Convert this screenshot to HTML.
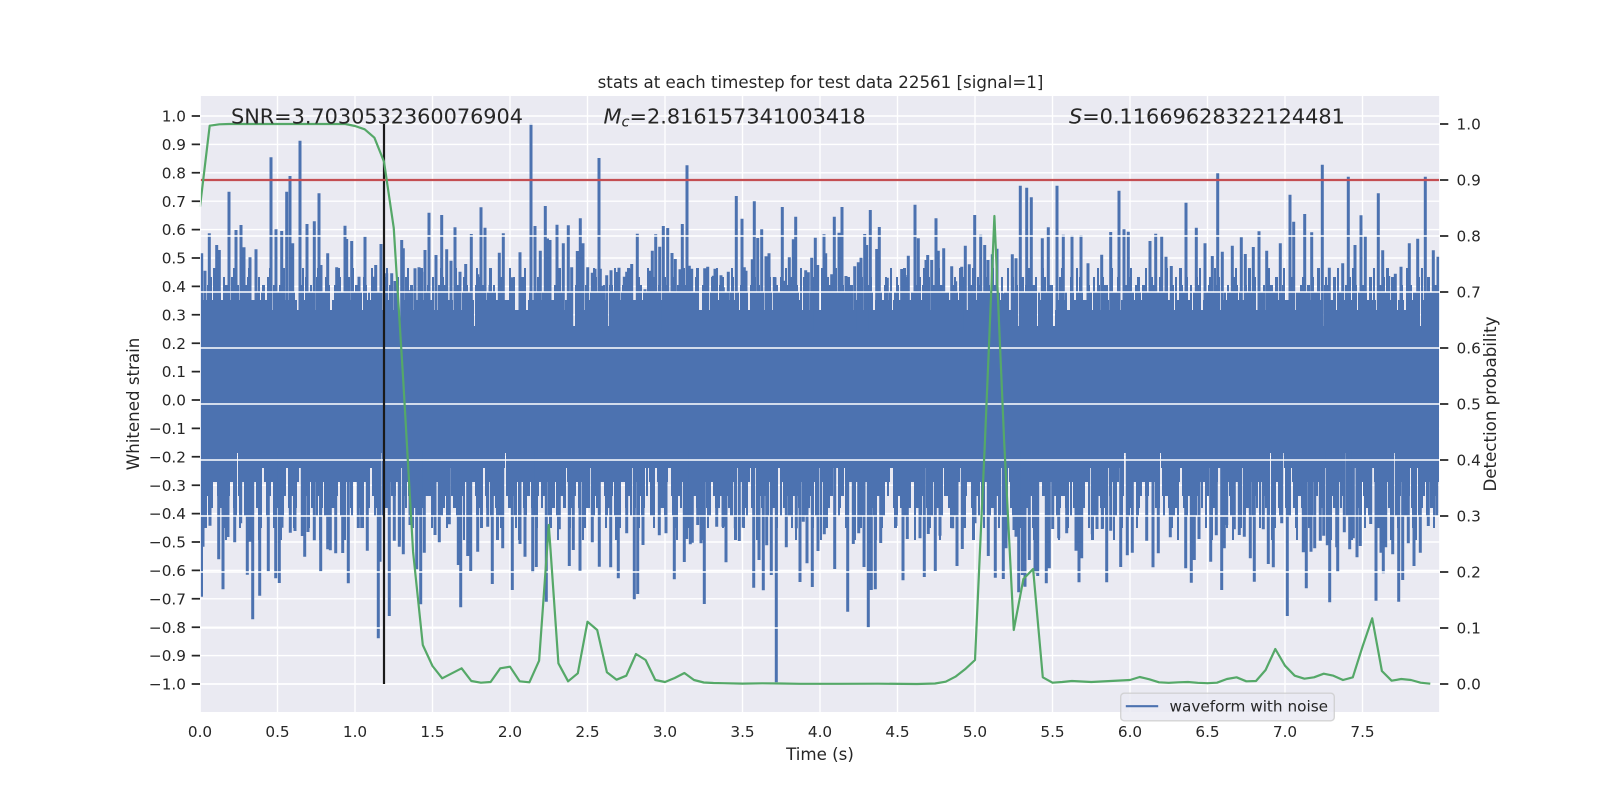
<!DOCTYPE html>
<html>
<head>
<meta charset="utf-8">
<title>stats at each timestep</title>
<style>
html,body{margin:0;padding:0;background:#fff;width:1600px;height:800px;overflow:hidden}
svg{display:block}
text{font-family:"DejaVu Sans","Liberation Sans",sans-serif;fill:#262626}
</style>
</head>
<body>
<svg xmlns="http://www.w3.org/2000/svg" width="1600" height="800" viewBox="0 0 1600 800">
<rect x="200" y="96" width="1240" height="616" fill="#eaeaf2"/>
<path fill="none" stroke="#fff" stroke-width="1.39" d="M277.5 96V712M355 96V712M432.5 96V712M510 96V712M587.5 96V712M665 96V712M742.5 96V712M820 96V712M897.5 96V712M975 96V712M1052.5 96V712M1130 96V712M1207.5 96V712M1285 96V712M1362.5 96V712M200 116H1440M200 144.4H1440M200 172.8H1440M200 201.2H1440M200 229.6H1440M200 258H1440M200 286.4H1440M200 314.8H1440M200 343.2H1440M200 371.6H1440M200 400H1440M200 428.4H1440M200 456.8H1440M200 485.2H1440M200 513.6H1440M200 542H1440M200 570.4H1440M200 598.8H1440M200 627.2H1440M200 655.6H1440M200 684H1440"/>
<rect x="200" y="326" width="1239" height="127" fill="#4c72b0"/>
<g fill="none" stroke="#4c72b0">
<path d="M200 320H1439" stroke-width="20" stroke-dasharray="13 2 7 1 17 3 9 2 6 1 14 3 10 2 19 2"/>
<path d="M200 315H1439" stroke-width="30" stroke-dasharray="7 3 5 4 9 2 3 4 8 5 6 2 11 6 4 3"/>
<path d="M200 311H1439" stroke-width="38" stroke-dasharray="3 4 5 7 2 3 4 6 2 5 6 8 3 3 2 4"/>
<path d="M200 307.5H1439" stroke-width="45" stroke-dasharray="2 5 3 8 2 4 4 9 2 6 3 7"/>
<path d="M200 303.5H1439" stroke-width="53" stroke-dasharray="2 7 3 11 2 6 3 13 2 9"/>
<path d="M200 299H1439" stroke-width="62" stroke-dasharray="2 11 3 17 2 13 2 19"/>
<path d="M200 459H1439" stroke-width="18" stroke-dashoffset="5" stroke-dasharray="13 2 7 1 17 3 9 2 6 1 14 3 10 2 19 2"/>
<path d="M200 466H1439" stroke-width="32" stroke-dashoffset="11" stroke-dasharray="7 3 5 4 9 2 3 4 8 5 6 2 11 6 4 3"/>
<path d="M200 473H1439" stroke-width="46" stroke-dashoffset="17" stroke-dasharray="3 4 5 7 2 3 4 6 2 5 6 8 3 3 2 4"/>
<path d="M200 479H1439" stroke-width="58" stroke-dashoffset="7" stroke-dasharray="3 5 4 6 2 7 5 8 3 4 2 6"/>
<path d="M200 483H1439" stroke-width="66" stroke-dashoffset="23" stroke-dasharray="2 7 3 11 2 6 3 13 2 9"/>
<path d="M200 489H1439" stroke-width="78" stroke-dashoffset="9" stroke-dasharray="2 11 3 17 2 13 2 19"/>
<path d="M200 495H1439" stroke-width="90" stroke-dasharray="2 23 2 31 3 19 2 37"/>
</g>
<path fill="none" stroke="#4c72b0" stroke-width="3" d="M201.7 253.3V330M205 270.7V330M209.3 233.3V330M216.7 245V330M219.3 250V330M229 191.7V330M236 230V330M241 225V330M244 247.3V330M250 257.3V330M256 249.3V330M271 157.3V330M276 229.3V330M281.7 231V330M286.7 191.7V330M290 176V330M292.7 243.3V330M300 140.7V330M307 224V330M314.3 221.3V330M319 193.3V330M321 265V330M327.7 253.3V330M336.7 267.3V330M345 225.7V330M346.7 239V330M351.7 241V330M359 276.7V330M365 236.7V330M373.3 276.7V330M375.7 265V330M381 244V330M386.7 273.3V330M391.7 273.3V330M395 281V330M401.7 240V330M403.3 248.3V330M408.3 290V330M411.7 289.3V330M415 268.3V330M419 267.3V330M421.7 271.7V330M425 250V330M429 212.7V330M436 255V330M441.7 215V330M446.7 249.3V330M451 260.7V330M455 227.3V330M460 271.7V330M465.7 264V330M471.3 234V330M477.7 274.3V330M481 207.3V330M485 227.7V330M490 285V330M499.3 252.7V330M503.3 233.3V330M512.3 277.3V330M520 252.3V330M523.3 278.3V330M531 123.3V330M535 226V330M540.3 250.7V330M545.3 206V330M547.5 238.5V330M550 240V330M557 224.7V330M563.3 243.3V330M568.3 225.3V330M571.7 267.3V330M577.3 251V330M580.3 218.3V330M583 243.3V330M587.7 267.3V330M592.3 272.7V330M595 268.7V330M599 158V330M600.3 268.7V330M602.7 285.7V330M606.7 275.3V330M611 270.3V330M616.7 272V330M619 267.7V330M624.3 276.7V330M626.7 271.7V330M629.3 268.7V330M631.7 264V330M637.3 233.7V330M639 285V330M645 289.3V330M649.7 270.7V330M652.3 250.7V330M655.7 234.3V330M659.7 246.7V330M663.3 226V330M667.7 228V330M672 253V330M675.3 259V330M680 269.3V330M682.3 224V330M687 165.3V330M689.3 265.7V330M691.7 268.7V330M704.7 268.3V330M707.7 266.7V330M713.3 275.7V330M715 268.7V330M721 275.3V330M723.3 287.3V330M728.3 271.7V330M736.3 196V330M742 218.7V330M744.3 267.3V330M746 270.7V330M752.3 259.3V330M754.3 201.3V330M757.7 238V330M761.7 229.3V330M766 256.3V330M769 253.3V330M774.3 277V330M775 277.3V330M782.3 207V330M785 280.7V330M789.3 257.3V330M793.3 239.3V330M795.7 216.7V330M805.7 270.3V330M808.3 272.3V330M811.7 257.7V330M815.3 237.7V330M817.7 265V330M824 234.3V330M825.7 253.3V330M831.7 274.3V330M834.3 216.7V330M839 232.7V330M842 207V330M846 276V330M854.7 266.3V330M858.3 262.3V330M861 257.7V330M864.7 234V330M866.7 245V330M870.3 210V330M876.7 249V330M879.3 227V330M887.3 277.7V330M901.7 269V330M905 275V330M908.3 255.7V330M915 204.7V330M918.3 238.3V330M926 260V330M927.7 255V330M931.7 260V330M936 218.3V330M938.3 250.7V330M943.7 248.3V330M951.7 266.3V330M955.7 281.3V330M961.7 266.7V330M965.3 245.7V330M969.3 264.3V330M974.7 215V330M980.7 234.7V330M984.7 245V330M988 260V330M992.3 254.3V330M997 248.7V330M1004.3 293.3V330M1012.3 254.3V330M1016 258.3V330M1020.3 185.7V330M1026.7 187.7V330M1031.3 197.3V330M1042.3 238.3V330M1048.3 227.3V330M1057 185.7V330M1063.3 234.7V330M1072 235.3V330M1081 235V330M1088 263.3V330M1101.7 254.7V330M1110.7 232V330M1119 190.7V330M1124 229.3V330M1128.3 231.7V330M1150 241V330M1155.7 233.7V330M1161.7 235.7V330M1166 256.7V330M1171.3 266V330M1186 202.7V330M1196.3 227.7V330M1205 243.3V330M1212.3 256V330M1217.7 173.3V330M1222.3 251.7V330M1232.3 245.7V330M1241.3 237.3V330M1245.3 254V330M1253.3 247V330M1259 231.3V330M1266.7 250.7V330M1280.3 243.3V330M1290 194.7V330M1293.7 221.7V330M1304.7 214V330M1311.7 232.3V330M1322.3 164.7V330M1329.3 267.7V330M1342.7 263.3V330M1348.3 176.7V330M1355 245V330M1361 215.3V330M1365.3 235.7V330M1378.3 193.3V330M1382.7 250.3V330M1388.7 276V330M1395.3 273.7V330M1401 266.7V330M1409.3 243.3V330M1417.7 238.7V330M1425.3 176.7V330M1433.3 250.3V330M1438 256.7V330"/>
<path fill="none" stroke="#4c72b0" stroke-width="3" d="M201.5 596.7V450M203 546.7V450M210 525.7V450M218.7 559.3V450M223 589.3V450M228 537V450M234.7 542.3V450M240.7 523.3V450M247.3 574.7V450M249.7 541.7V450M252.7 619.3V450M259.7 595.7V450M268.3 571.3V450M275.7 578.3V450M279.3 583V450M282 527.7V450M290.3 532.7V450M295 531V450M302.3 536V450M304.7 556.7V450M308 532V450M314.3 540.3V450M320.7 571.3V450M327.7 549.3V450M330.3 550.3V450M335.7 553.3V450M342.7 553V450M348.3 583.3V450M358.3 528V450M361.7 528V450M367.3 550.7V450M378.3 638.3V450M380 561.7V450M389.3 616V450M394.3 540.7V450M399.3 546.7V450M403.3 554.3V450M410 525V450M416.7 569.3V450M420.7 604.3V450M424.3 552.7V450M435 535V450M439.3 542.3V450M449.3 524.3V450M458.3 565V450M460.7 607.3V450M467.7 556V450M470.7 571V450M477.7 551.7V450M487.7 526.7V450M492.3 584V450M502.7 548.3V450M512.3 590V450M520 544V450M525 556.7V450M532.7 572.7V450M536.3 567V450M546.3 601.7V450M559.3 529.3V450M569.3 566V450M573.3 550V450M580 570.7V450M592.3 542.3V450M599.3 566.7V450M610.7 567.3V450M618.3 578.3V450M626.7 533.3V450M634.3 599.3V450M637.7 594V450M643 545V450M659.3 535.3V450M666 533.3V450M674.3 579.3V450M684.3 562V450M686.7 539V450M690.3 544.3V450M692.3 542.7V450M697.7 525V450M701 543.3V450M704.3 604V450M716.7 526.7V450M723 526.7V450M726 562.3V450M735.3 528.3V450M739.3 541V450M743.3 527.7V450M753.7 587.7V450M759 560V450M763.3 590.3V450M766.7 545.3V450M771.3 575V450M776.3 682.3V450M786.3 547.3V450M796.3 528.3V450M800 582V450M803.3 521.7V450M807 563.3V450M812.3 587V450M818 551V450M824.3 534.3V450M834.7 569V450M847.7 611.7V450M853.3 544V450M858.7 533.3V450M864 567V450M868.3 627.3V450M871.3 590V450M875.3 589.3V450M880.7 543V450M896 526V450M903 580.3V450M907.3 539V450M920 538.3V450M924.3 577V450M928.3 534V450M935.3 571V450M940 535.7V450M952.7 528.3V450M957 566V450M962.3 549V450M975 523.3V450M988.3 556V450M995.3 577.7V450M1003.3 579V450M1006 548.3V450M1014 530V450M1016 536.7V450M1018.7 592.3V450M1022.3 575V450M1025 586.7V450M1029.3 560V450M1035 573.3V450M1037.7 576V450M1046.3 583.3V450M1049.3 568.3V450M1052.7 529V450M1058.7 538.3V450M1066.7 533.3V450M1076 550.7V450M1079 582.3V450M1081.7 558.3V450M1092.3 534.3V450M1097 529V450M1102.3 529V450M1106.7 582.3V450M1110.7 530.7V450M1120.7 567V450M1127.3 555.3V450M1132.3 552.7V450M1146.7 540.7V450M1153 567.3V450M1158.3 553.3V450M1170.3 537.3V450M1185.7 568.3V450M1191.3 582.7V450M1194.3 560V450M1199 539V450M1210.7 561.7V450M1216.3 535.3V450M1221.7 590V450M1224.3 548.3V450M1226.7 525V450M1234.3 529.3V450M1239.3 535V450M1244.3 536.7V450M1250.3 558.3V450M1254.3 581.7V450M1263.3 529.3V450M1268.3 564V450M1273.3 567.3V450M1281.7 523.3V450M1287.3 616V450M1303.3 552.3V450M1306.3 588.3V450M1311 551.7V450M1314.7 548.3V450M1320.3 540.7V450M1323.7 535.7V450M1327.3 545.3V450M1329.7 602.3V450M1336.7 547.3V450M1337.7 571.7V450M1344.3 532.3V450M1349.7 549.3V450M1353.3 538.3V450M1357 557.3V450M1360.3 546V450M1370.7 524V450M1376 600.7V450M1381 552.7V450M1383.3 573.3V450M1385.7 547.3V450M1392.7 554.3V450M1398.7 601.7V450M1402.7 580V450M1408.3 543.3V450M1414 566V450M1420.3 552.7V450M1428.3 526V450M1436.7 516V450"/>
<path fill="none" stroke="#fff" stroke-width="1.39" d="M200 124H1440M200 180H1440M200 236H1440M200 292H1440M200 348H1440M200 404H1440M200 460H1440M200 516H1440M200 572H1440M200 628H1440M200 684H1440"/>
<path d="M384 124V684" stroke="#1a1a1a" stroke-width="2.2" fill="none"/>
<path d="M200 180H1440" stroke="#c44e52" stroke-width="2.2" fill="none"/>
<path fill="none" stroke="#55a868" stroke-width="2.2" stroke-linejoin="round" d="M200 206.7L209.7 125.7L219.4 124.3L229 124L345.3 124L355 126L364.7 129.3L374.4 137.7L384 161.7L393.75 228L403.4 383L413.1 552L422.8 645L432.5 666L442.2 678.3L451.9 673.3L461.6 668.3L471.3 681L480.9 682.7L490.6 682L500.3 668.3L510 666.7L519.7 681.3L529.4 682.3L539.1 660.7L548.8 525L558.4 663.3L568.1 681.3L577.8 673.3L587.5 621.7L597.2 630L606.9 672.3L616.6 679.7L626.3 675.7L636 654L645.6 660L655.3 680L665 682L674.7 678L684.4 673L694 680L703.8 682.5L713.5 683L723 683.2L742.5 683.6L762 683.3L781 683.5L800 683.8L840 683.8L878 683.7L917 684L935 683.5L945.7 681.7L955.4 676.7L965 669.3L975 660L984.7 447L994.4 216L1004.1 440L1013.75 630L1023.4 579L1033.1 569L1042.8 677.3L1052.5 682.7L1062.2 682L1071.9 681L1081.6 681.5L1091.3 682L1101 681.5L1110.6 681L1120.3 680.5L1130 680L1139.7 677L1149.4 679.3L1159 682.3L1168.75 682.8L1178.4 682.3L1188 682L1197.8 682.8L1207.5 683.2L1217 682.7L1226.9 679L1236.6 677.3L1246.3 681.3L1256 681L1265.6 670L1275.3 649L1285 665.7L1294.7 675.7L1304.4 678.7L1314 677.3L1323.75 673.7L1333.4 675.7L1343 680L1352.8 677.3L1362.5 646.7L1372.2 618.3L1381.9 671L1391.6 680.7L1401.25 679L1411 680L1420.6 682.7L1430.3 683.7"/>
<path fill="none" stroke="#fff" stroke-width="1.74" d="M200 96V712M1440 96V712"/>
<path fill="none" stroke="#262626" stroke-width="1.74" d="M191.7 116H200M191.7 144.4H200M191.7 172.8H200M191.7 201.2H200M191.7 229.6H200M191.7 258H200M191.7 286.4H200M191.7 314.8H200M191.7 343.2H200M191.7 371.6H200M191.7 400H200M191.7 428.4H200M191.7 456.8H200M191.7 485.2H200M191.7 513.6H200M191.7 542H200M191.7 570.4H200M191.7 598.8H200M191.7 627.2H200M191.7 655.6H200M191.7 684H200M1440 124H1448.3M1440 180H1448.3M1440 236H1448.3M1440 292H1448.3M1440 348H1448.3M1440 404H1448.3M1440 460H1448.3M1440 516H1448.3M1440 572H1448.3M1440 628H1448.3M1440 684H1448.3"/>
<g font-size="15.28" text-anchor="end">
<text x="186" y="121.6">1.0</text><text x="186" y="150">0.9</text><text x="186" y="178.4">0.8</text><text x="186" y="206.8">0.7</text><text x="186" y="235.2">0.6</text><text x="186" y="263.6">0.5</text><text x="186" y="292">0.4</text><text x="186" y="320.4">0.3</text><text x="186" y="348.8">0.2</text><text x="186" y="377.2">0.1</text><text x="186" y="405.6">0.0</text><text x="186" y="434">−0.1</text><text x="186" y="462.4">−0.2</text><text x="186" y="490.8">−0.3</text><text x="186" y="519.2">−0.4</text><text x="186" y="547.6">−0.5</text><text x="186" y="576">−0.6</text><text x="186" y="604.4">−0.7</text><text x="186" y="632.8">−0.8</text><text x="186" y="661.2">−0.9</text><text x="186" y="689.6">−1.0</text>
</g>
<g font-size="15.28">
<text x="1456.5" y="129.6">1.0</text><text x="1456.5" y="185.6">0.9</text><text x="1456.5" y="241.6">0.8</text><text x="1456.5" y="297.6">0.7</text><text x="1456.5" y="353.6">0.6</text><text x="1456.5" y="409.6">0.5</text><text x="1456.5" y="465.6">0.4</text><text x="1456.5" y="521.6">0.3</text><text x="1456.5" y="577.6">0.2</text><text x="1456.5" y="633.6">0.1</text><text x="1456.5" y="689.6">0.0</text>
</g>
<g font-size="15.28" text-anchor="middle">
<text x="200" y="737">0.0</text><text x="277.5" y="737">0.5</text><text x="355" y="737">1.0</text><text x="432.5" y="737">1.5</text><text x="510" y="737">2.0</text><text x="587.5" y="737">2.5</text><text x="665" y="737">3.0</text><text x="742.5" y="737">3.5</text><text x="820" y="737">4.0</text><text x="897.5" y="737">4.5</text><text x="975" y="737">5.0</text><text x="1052.5" y="737">5.5</text><text x="1130" y="737">6.0</text><text x="1207.5" y="737">6.5</text><text x="1285" y="737">7.0</text><text x="1362.5" y="737">7.5</text>
</g>
<text x="820.5" y="88" font-size="16.67" text-anchor="middle">stats at each timestep for test data 22561 [signal=1]</text>
<text x="820" y="760" font-size="16.67" text-anchor="middle">Time (s)</text>
<text transform="translate(139 404) rotate(-90)" font-size="16.67" text-anchor="middle">Whitened strain</text>
<text transform="translate(1496 404) rotate(-90)" font-size="16.67" text-anchor="middle">Detection probability</text>
<text x="231" y="123.5" font-size="20.83" textLength="292">SNR=3.7030532360076904</text>
<text x="603.5" y="123.5" font-size="20.83"><tspan font-style="italic">M</tspan><tspan font-style="italic" font-size="14.6" dy="3">c</tspan><tspan dy="-3">=2.816157341003418</tspan></text>
<text x="1069" y="123.5" font-size="20.83"><tspan font-style="italic">S</tspan>=0.11669628322124481</text>
<rect x="1120.7" y="693.2" width="213.6" height="27.6" rx="3.5" fill="#eaeaf2" fill-opacity="0.8" stroke="#ccc" stroke-opacity="0.8" stroke-width="1.39"/>
<path d="M1125.8 706.2H1158.2" stroke="#4c72b0" stroke-width="2.08" fill="none"/>
<text x="1169.5" y="711.5" font-size="15.28">waveform with noise</text>
</svg>
</body>
</html>
